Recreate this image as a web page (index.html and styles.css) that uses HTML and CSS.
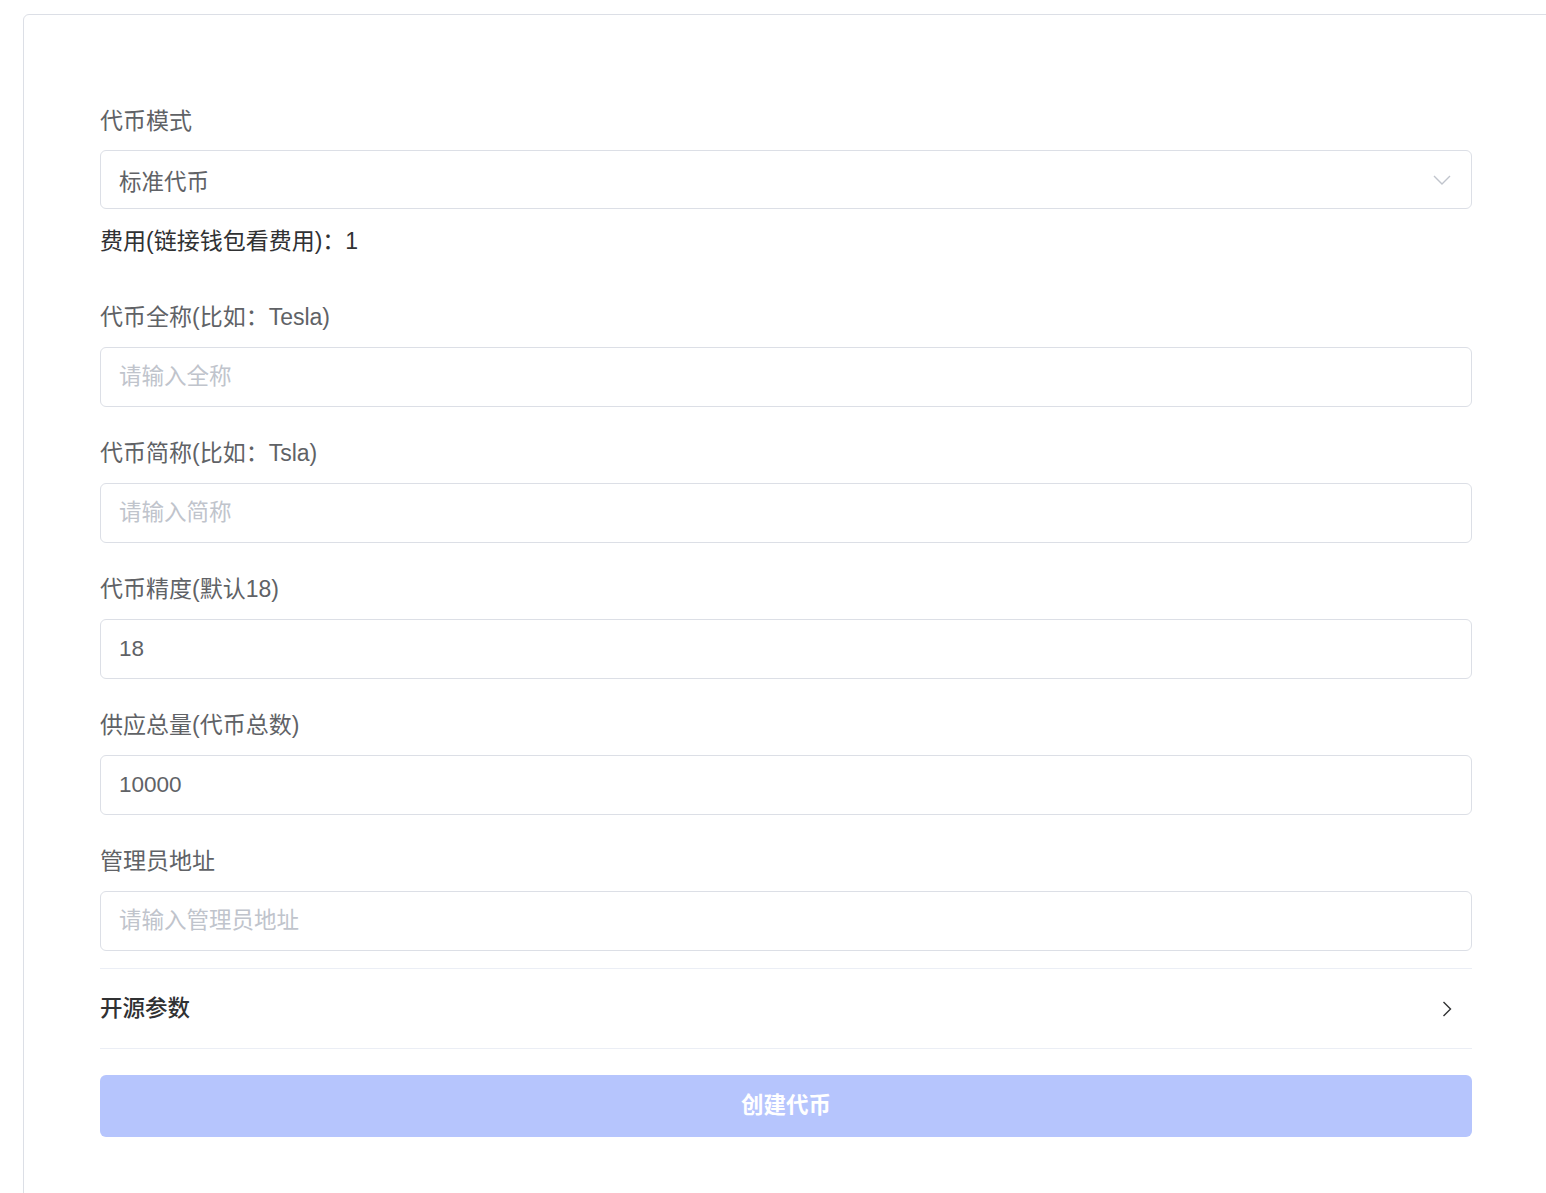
FILE: index.html
```html
<!DOCTYPE html>
<html lang="zh-CN">
<head>
  <meta charset="UTF-8" />
  <meta name="viewport" content="width=device-width, initial-scale=1.0" />
  <title>创建代币</title>
  <link rel="stylesheet" href="styles.css">
</head>
<body>
  <div class="page">
    <div class="card">
      <form class="token-form">
        <!-- 代币模式 -->
        <div class="form-item">
          <label class="form-label">代币模式</label>
          <div class="select">
            <span class="select-value">标准代币</span>
            <svg class="select-arrow" width="18" height="10" viewBox="0 0 18 10">
              <path d="M1 1 L9 9 L17 1" fill="none" stroke="#c0c4cc" stroke-width="1.4" />
            </svg>
          </div>
          <div class="fee">费用(链接钱包看费用)：1</div>
        </div>

        <div class="form-item">
          <label class="form-label">代币全称(比如：Tesla)</label>
          <input class="input" type="text" placeholder="请输入全称" />
        </div>

        <div class="form-item">
          <label class="form-label">代币简称(比如：Tsla)</label>
          <input class="input" type="text" placeholder="请输入简称" />
        </div>

        <div class="form-item">
          <label class="form-label">代币精度(默认18)</label>
          <input class="input" type="text" value="18" />
        </div>

        <div class="form-item">
          <label class="form-label">供应总量(代币总数)</label>
          <input class="input" type="text" value="10000" />
        </div>

        <div class="form-item last">
          <label class="form-label">管理员地址</label>
          <input class="input" type="text" placeholder="请输入管理员地址" />
        </div>

        <!-- 开源参数 -->
        <div class="collapse-row">
          <span class="collapse-title">开源参数</span>
          <svg class="collapse-arrow" width="10" height="16" viewBox="0 0 10 16">
            <path d="M1.5 1 L8.5 8 L1.5 15" fill="none" stroke="#303133" stroke-width="1.4" />
          </svg>
        </div>

        <button class="submit" type="button">创建代币</button>
      </form>
    </div>
  </div>
</body>
</html>
```

FILE: styles.css
```css
body {
  margin: 0;
  background: #fff;
  font-family: "Liberation Sans", "Noto Sans CJK SC", sans-serif;
  overflow: hidden;
}

.page {
  padding: 14px 0 0 23px;
}

.card {
  width: 1524px;
  min-height: 1200px;
  border: 1px solid #dcdfe6;
  border-radius: 6px;
  padding: 91px 76px 0 76px;
  box-sizing: content-box;
}

.token-form {
  width: 1372px;
}

.form-item {
  margin-bottom: 31px;
}
.form-item.last {
  margin-bottom: 17px;
}

.form-label {
  display: block;
  font-size: 23px;
  line-height: 30px;
  color: #606266;
  margin-bottom: 14px;
}
.form-item + .form-item .form-label {
  margin-bottom: 15px;
}

.select,
.input {
  display: flex;
  align-items: center;
  width: 100%;
  height: 59px;
  box-sizing: border-box;
  border: 1px solid #dcdfe6;
  border-radius: 6px;
  padding: 0 18px;
  font-family: inherit;
  font-size: 22.5px;
  color: #606266;
  background: #fff;
  outline: none;
}
.input {
  height: 60px;
}
.input::placeholder {
  color: #c0c4cc;
}

.select {
  justify-content: space-between;
}
.select-arrow {
  margin-right: 2px;
}

.fee {
  margin-top: 17px;
  font-size: 23px;
  line-height: 30px;
  color: #303133;
}
.form-item:first-child {
  margin-bottom: 46px;
}

.collapse-row {
  display: flex;
  align-items: center;
  justify-content: space-between;
  height: 79px;
  border-top: 1px solid #ebeef5;
  border-bottom: 1px solid #ebeef5;
  padding-right: 20px;
}
.collapse-title {
  font-size: 22.5px;
  color: #303133;
  font-weight: 500;
  margin-bottom: 6px;
}

.submit {
  display: block;
  width: 100%;
  height: 62px;
  margin-top: 26px;
  padding: 0 0 6px;
  border: none;
  border-radius: 6px;
  background: #b6c5fd;
  color: #ffffff;
  font-family: inherit;
  font-size: 22.5px;
  font-weight: 700;
  cursor: not-allowed;
}
```
